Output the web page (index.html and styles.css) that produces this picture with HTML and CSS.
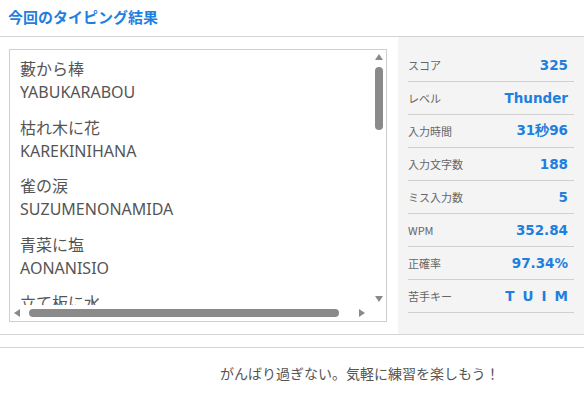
FILE: index.html
```html
<!DOCTYPE html>
<html lang="ja">
<head>
    <meta charset="UTF-8">
    <title>今回のタイピング結果</title>
    <link rel="stylesheet" href="styles.css">
</head>
<body>
    <div class="header">
        <h1>今回のタイピング結果</h1>
    </div>

    <div class="result">
        <div class="word-list">
            <div class="word-scroll">
                <div class="word">
                    <div>藪から棒</div>
                    <div>YABUKARABOU</div>
                </div>
                <div class="word">
                    <div>枯れ木に花</div>
                    <div>KAREKINIHANA</div>
                </div>
                <div class="word">
                    <div>雀の涙</div>
                    <div>SUZUMENONAMIDA</div>
                </div>
                <div class="word">
                    <div>青菜に塩</div>
                    <div>AONANISIO</div>
                </div>
                <div class="word">
                    <div>立て板に水</div>
                    <div>TATEITANIMIZU</div>
                </div>
            </div>
            <div class="vbar">
                <span class="arrow up"></span>
                <span class="vthumb"></span>
                <span class="vspace"></span>
                <span class="arrow down"></span>
            </div>
            <div class="hbar">
                <span class="arrow left"></span>
                <span class="hthumb"></span>
                <span class="arrow right"></span>
            </div>
            <div class="corner"></div>
        </div>

        <div class="stats">
            <div class="stat"><span class="label">スコア</span><span class="value">325</span></div>
            <div class="stat"><span class="label">レベル</span><span class="value">Thunder</span></div>
            <div class="stat"><span class="label">入力時間</span><span class="value">31秒96</span></div>
            <div class="stat"><span class="label">入力文字数</span><span class="value">188</span></div>
            <div class="stat"><span class="label">ミス入力数</span><span class="value">5</span></div>
            <div class="stat"><span class="label">WPM</span><span class="value">352.84</span></div>
            <div class="stat"><span class="label">正確率</span><span class="value">97.34%</span></div>
            <div class="stat"><span class="label">苦手キー</span><span class="value keys">TUIM</span></div>
        </div>
    </div>

    <div class="footer">
        <p>がんばり過ぎない。気軽に練習を楽しもう！</p>
    </div>
</body>
</html>
```

FILE: styles.css
```css
body {
    margin: 0;
    font-family: "Noto Sans", "Noto Sans CJK JP", sans-serif;
    color: #555;
    background-color: white;
}

.header {
    height: 36px;
    border-bottom: 1px solid #d4d4d4;
    padding-left: 8px;
}

.header h1 {
    margin: 0;
    font-size: 15px;
    line-height: 34px;
    color: #1f7fde;
    font-family: "Noto Sans CJK JP", sans-serif;
    font-weight: bold;
}

.result {
    display: flex;
    border-bottom: 1px solid #d4d4d4;
}

.word-list {
    display: grid;
    grid-template-columns: 361px 15px;
    grid-template-rows: 255px 16px;
    margin: 12px 11px 12px 9px;
    border: 1px solid #cfcfcf;
    background-color: white;
}

.word-scroll {
    overflow: hidden;
    padding: 8px 0 0 10px;
    font-size: 16px;
    line-height: 23px;
    color: #555;
    white-space: nowrap;
}

.word {
    margin-bottom: 12.5px;
}

.vbar {
    display: flex;
    flex-direction: column;
    align-items: center;
    padding-top: 4px;
}

.vthumb {
    width: 8px;
    height: 63px;
    margin-top: 7px;
    border-radius: 4px;
    background-color: #8a8a8a;
}

.vspace {
    flex: 1;
}

.hbar {
    display: flex;
    align-items: center;
    padding-left: 4px;
}

.hthumb {
    width: 310px;
    height: 8px;
    margin-left: 9px;
    margin-right: 20px;
    border-radius: 4px;
    background-color: #8a8a8a;
}

.arrow {
    width: 0;
    height: 0;
    border-style: solid;
    border-color: transparent;
}

.arrow.up {
    border-width: 0 4px 6px 4px;
    border-bottom-color: #8a8a8a;
}

.arrow.down {
    border-width: 6px 4px 0 4px;
    border-top-color: #8a8a8a;
    margin-bottom: 3px;
}

.arrow.left {
    border-width: 4px 6px 4px 0;
    border-right-color: #8a8a8a;
}

.arrow.right {
    border-width: 4px 0 4px 6px;
    border-left-color: #8a8a8a;
}

.stats {
    flex: 1;
    background-color: #f4f4f4;
    padding: 12px 10px 0 10px;
}

.stat {
    display: flex;
    justify-content: space-between;
    align-items: center;
    height: 32px;
    border-bottom: 1px solid #d0d0d0;
    padding-right: 6px;
}

.label {
    font-family: "Noto Sans CJK JP", sans-serif;
    font-size: 11px;
    color: #666;
}

.value {
    font-family: "DejaVu Sans", sans-serif;
    font-size: 13.5px;
    font-weight: bold;
    color: #1f7fde;
}

.keys {
    letter-spacing: 8px;
    margin-right: -8px;
}

.footer {
    margin-top: 12px;
    border-top: 1px solid #d4d4d4;
}

.footer p {
    margin: 15px 0 0 220px;
    font-family: "Noto Sans CJK JP", sans-serif;
    font-size: 14px;
    color: #555;
}
```
